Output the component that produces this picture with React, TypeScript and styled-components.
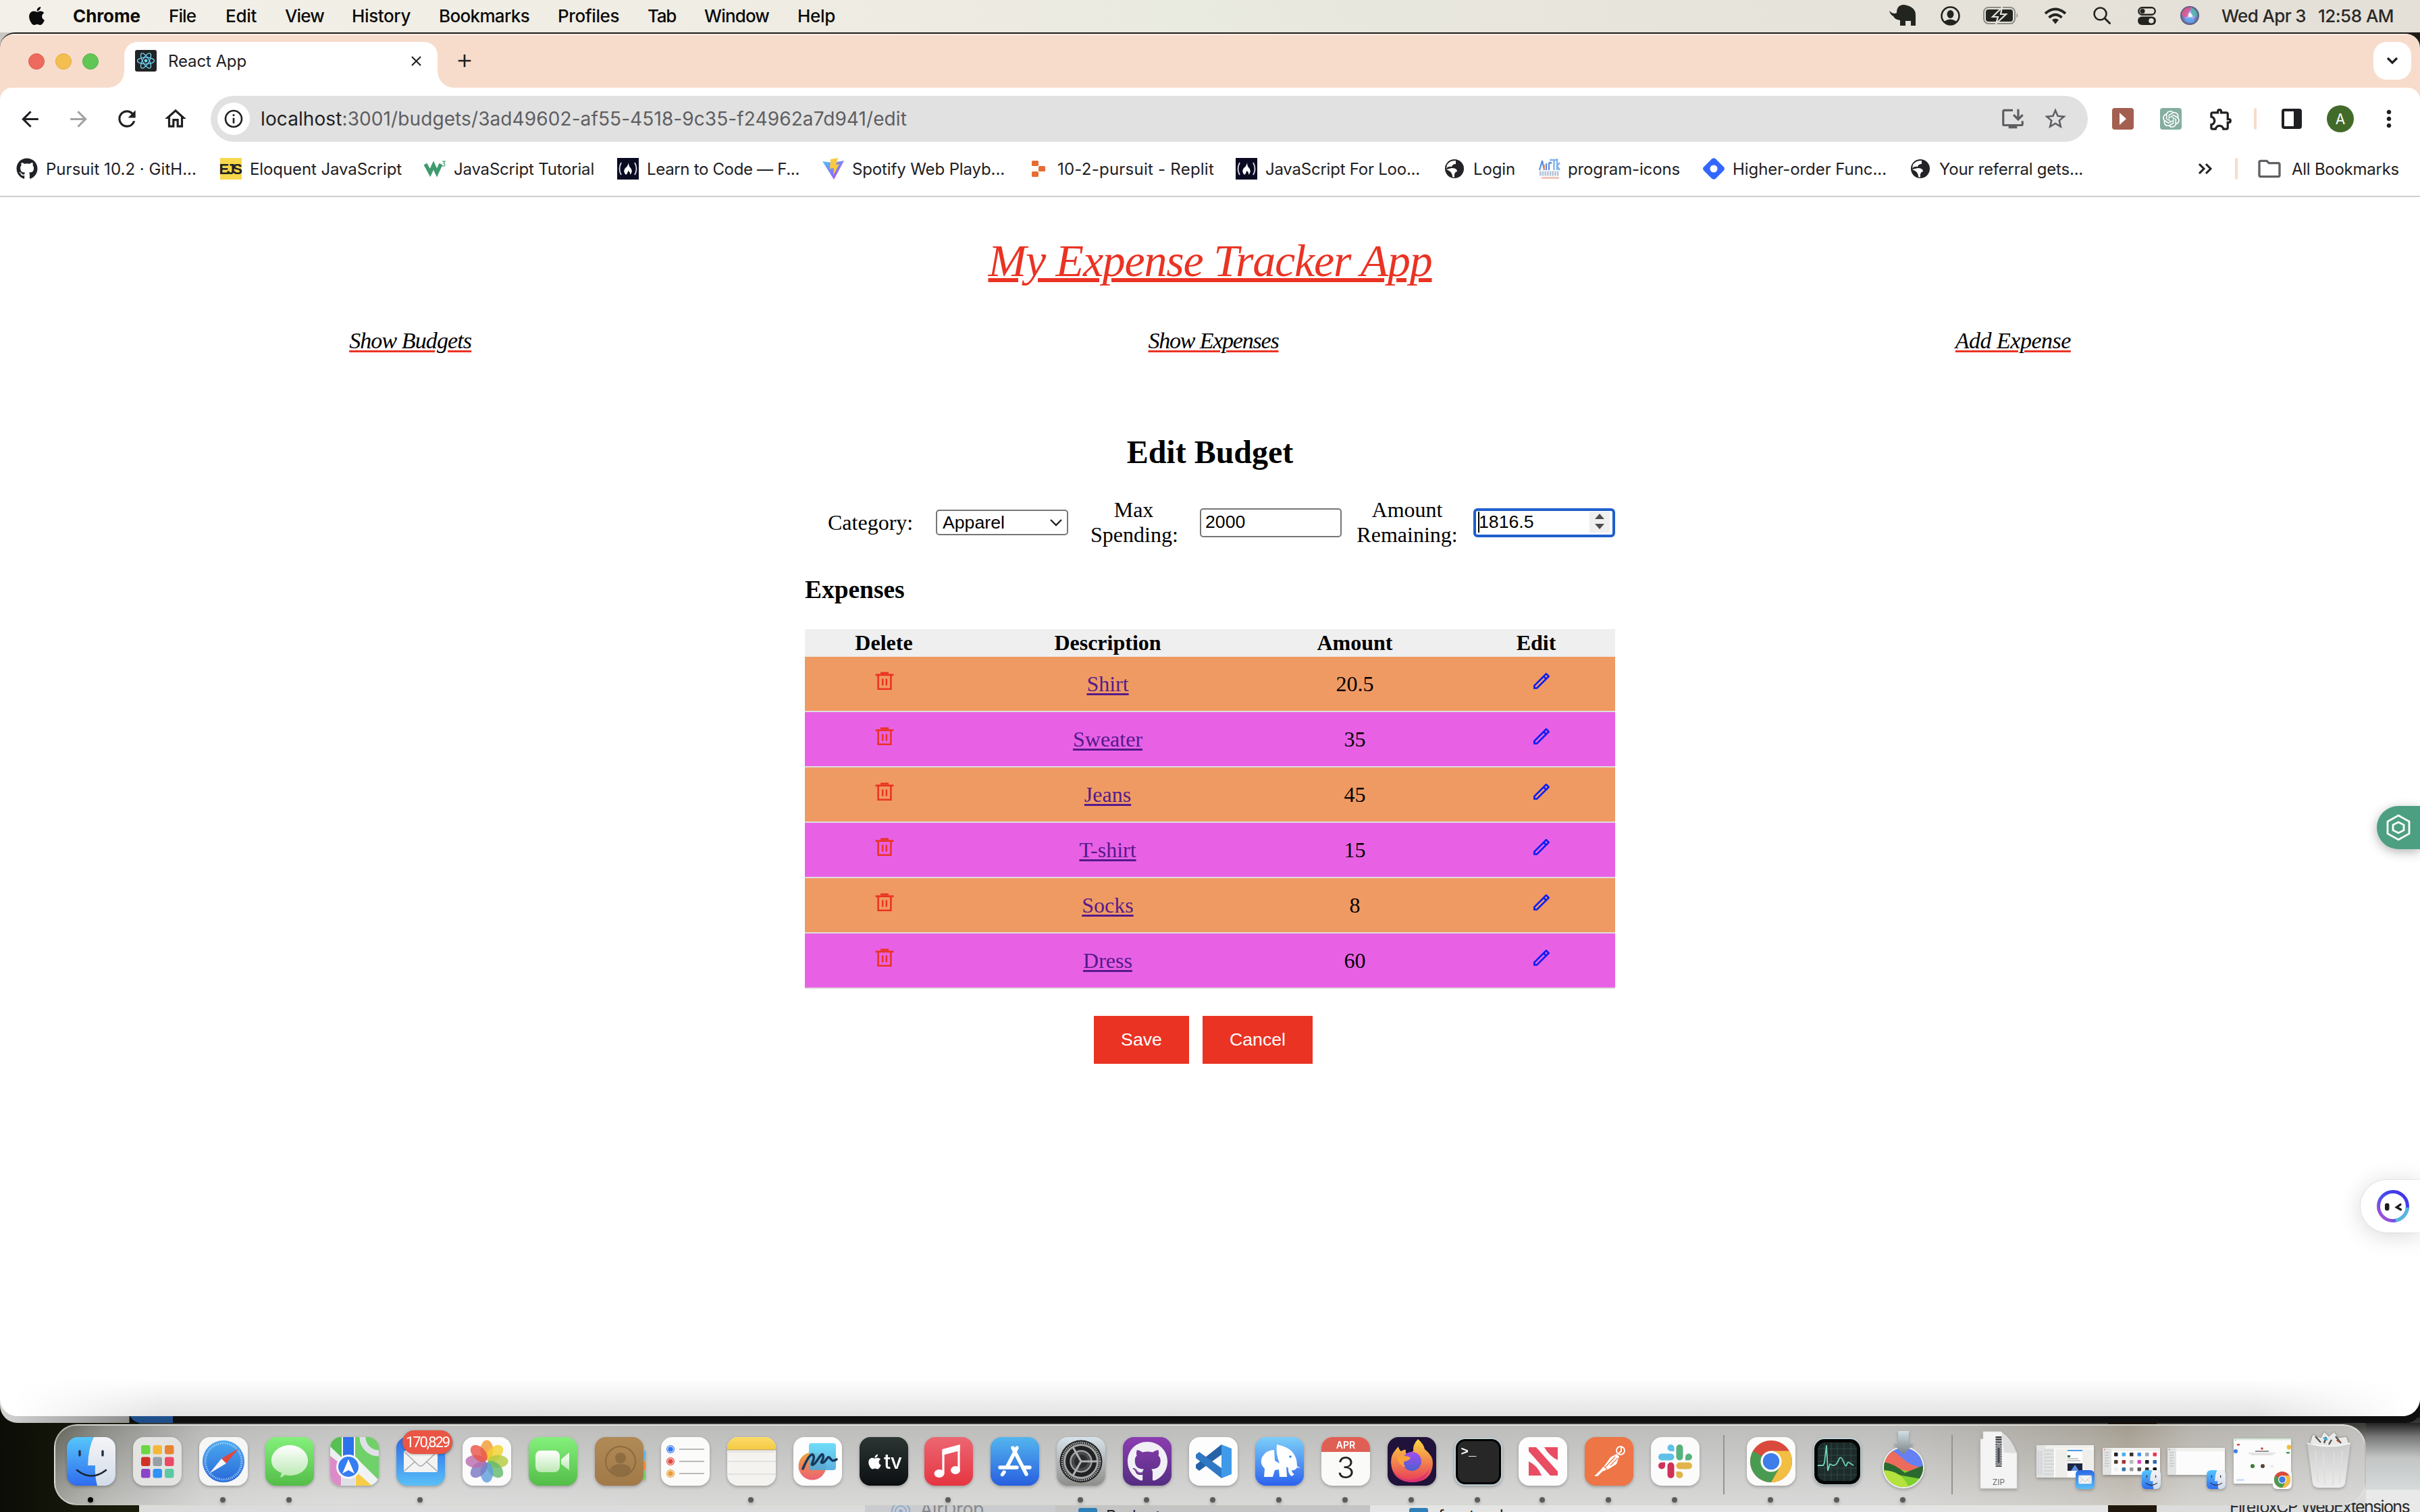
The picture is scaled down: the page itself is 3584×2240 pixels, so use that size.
import React, { useLayoutEffect, useRef, useState } from "react";
import styled, { createGlobalStyle, css } from "styled-components";
import { FaApple, FaGithub } from "react-icons/fa";
import { SiOpenai } from "react-icons/si";
import { RiPencilLine } from "react-icons/ri";
import {
  MdArrowBack,
  MdArrowForward,
  MdRefresh,
  MdOutlineHome,
  MdOutlineInfo,
  MdInstallDesktop,
  MdStarBorder,
  MdOutlineExtension,
  MdMoreVert,
  MdClose,
  MdAdd,
  MdOutlineFolder,
} from "react-icons/md";

const UI = `Inter, "Liberation Sans", sans-serif`;
const SERIF = `"Liberation Serif", serif`;
const SANS = `"Liberation Sans", Arial, sans-serif`;
const SCRIPT = `"Apple Chancery", "Z003", "URW Chancery L", "Liberation Serif", cursive`;

const Global = createGlobalStyle`
  html, body { margin: 0; padding: 0; overflow: hidden; background: #101208; }
  * { box-sizing: border-box; }
  svg { display: block; flex: none; }
`;

/* ---------- text fitted to a fixed width ---------- */

const FitBox = styled.span<{ $w: number }>`
  display: block;
  flex: none;
  width: ${(p) => p.$w}px;
  white-space: pre;
`;

function Fit({ w, children }: { w: number; children: React.ReactNode }) {
  const ref = useRef<HTMLSpanElement>(null);
  const [spacing, setSpacing] = useState(0);
  useLayoutEffect(() => {
    const el = ref.current;
    if (!el) return;
    const count = (el.textContent || "").length;
    setSpacing((w - el.getBoundingClientRect().width) / count);
  }, [w]);
  return (
    <FitBox $w={w}>
      <span ref={ref} style={{ letterSpacing: spacing }}>
        {children}
      </span>
    </FitBox>
  );
}

/* ---------- desktop ---------- */

const Desktop = styled.div`
  position: relative;
  width: 3584px;
  height: 2240px;
  overflow: hidden;
  display: flex;
  flex-direction: column;
  background: linear-gradient(90deg, #0c0d07, #1a1d0c 180px, #15160c);
  font-family: ${UI};
  color: #1f2023;
`;

const Backdrop = styled.div<{ $x: number; $y: number; $w: number; $h: number; $bg: string; $r?: string }>`
  position: absolute;
  left: ${(p) => p.$x}px;
  top: ${(p) => p.$y}px;
  width: ${(p) => p.$w}px;
  height: ${(p) => p.$h}px;
  background: ${(p) => p.$bg};
  border-radius: ${(p) => p.$r || 0};
`;

const PeekText = styled.div<{ $x: number; $y: number; $c: string; $size?: number }>`
  position: absolute;
  left: ${(p) => p.$x}px;
  top: ${(p) => p.$y}px;
  font-size: ${(p) => p.$size || 26}px;
  line-height: 30px;
  color: ${(p) => p.$c};
`;

const PeekIcon = styled.div<{ $x: number; $y: number }>`
  position: absolute;
  left: ${(p) => p.$x}px;
  top: ${(p) => p.$y}px;
`;

/* ---------- menu bar ---------- */

const MenuBar = styled.header`
  position: relative;
  height: 48px;
  flex: none;
  display: flex;
  align-items: center;
  padding: 0 39px 2px 39px;
  background: linear-gradient(90deg, #f3f0e9, #edebe1 1500px, #e9eae0 1750px, #e7e4dc 2400px, #e4e0d8);
  font-size: 26px;
  font-weight: 500;
  color: #0b0b0b;
`;

const MenuItem = styled.div<{ $ml: number; $bold?: boolean }>`
  margin-left: ${(p) => p.$ml}px;
  font-weight: ${(p) => (p.$bold ? 700 : 500)};
`;

const StatusArea = styled.div`
  margin-left: auto;
  display: flex;
  align-items: center;
`;

const StatusIcon = styled.div<{ $mr: number }>`
  margin-right: ${(p) => p.$mr}px;
`;

const Clock = styled.div`
  display: flex;
  gap: 18px;
  color: #2a2927;
`;

/* ---------- browser ---------- */

const Browser = styled.main`
  position: relative;
  height: 2050px;
  flex: none;
  border-top: 2px solid #1d1b19;
  border-radius: 22px 22px 26px 26px;
  background: #f7dccc;
  overflow: hidden;
  display: flex;
  flex-direction: column;
`;

const TabStrip = styled.div`
  height: 80px;
  flex: none;
  padding: 10px 13px 0 42px;
  display: flex;
  align-items: flex-start;
  border-top: 2px solid #faeee6;
`;

const Lights = styled.div`
  display: flex;
  gap: 16px;
  margin-top: 17px;
`;

const Light = styled.i<{ $c: string; $b: string }>`
  width: 24px;
  height: 24px;
  border-radius: 50%;
  background: ${(p) => p.$c};
  border: 1px solid ${(p) => p.$b};
`;

const Tab = styled.div`
  position: relative;
  margin-left: 38px;
  width: 464px;
  height: 68px;
  border-radius: 20px 20px 0 0;
  background: #fff;
  display: flex;
  align-items: center;
  padding: 0 22px 12px 16px;
  gap: 17px;
  font-size: 24px;
  &::before,
  &::after {
    content: "";
    position: absolute;
    bottom: 0;
    width: 24px;
    height: 24px;
  }
  &::before {
    left: -24px;
    background: radial-gradient(circle at 0 0, transparent 23.5px, #fff 24px);
  }
  &::after {
    right: -24px;
    background: radial-gradient(circle at 100% 0, transparent 23.5px, #fff 24px);
  }
`;

const TabClose = styled.div`
  margin-left: auto;
  margin-right: -3px;
`;

const NewTab = styled.div`
  margin: 12px 0 0 24px;
`;

const TabSearch = styled.div`
  margin-left: auto;
  width: 56px;
  height: 56px;
  border-radius: 20px;
  background: #fff;
  display: grid;
  place-items: center;
`;

const Toolbar = styled.div`
  height: 90px;
  flex: none;
  background: #fff;
  border-radius: 18px 18px 0 0;
  padding: 2px 0 0 26px;
  display: flex;
  align-items: center;
`;

const NavButton = styled.div<{ $ml: number; $dim?: boolean }>`
  margin-left: ${(p) => p.$ml}px;
  color: ${(p) => (p.$dim ? "#a2a2a3" : "#1f2023")};
`;

const Address = styled.div`
  margin-left: 33px;
  width: 2780px;
  height: 68px;
  flex: none;
  border-radius: 34px;
  background: #e1e1e1;
  display: flex;
  align-items: center;
  padding: 0 29px 0 10px;
  font-size: 28px;
  color: #5d5e61;
`;

const InfoChip = styled.div`
  width: 48px;
  height: 48px;
  border-radius: 50%;
  background: #fff;
  display: grid;
  place-items: center;
  color: #1f2023;
  margin-right: 16px;
`;

const Host = styled.b`
  font-weight: 400;
  color: #1f2023;
`;

const AddressTools = styled.div`
  margin-left: auto;
  display: flex;
  align-items: center;
  gap: 25px;
`;

const Extensions = styled.div`
  flex: none;
  display: flex;
  align-items: center;
  padding-left: 36px;
`;

const ExtTile = styled.div<{ $bg: string }>`
  width: 32px;
  height: 32px;
  flex: none;
  border-radius: 4px;
  background: ${(p) => p.$bg};
  color: #fff;
  display: grid;
  place-items: center;
  margin-right: 39px;
`;

const Divider = styled.i<{ $ml?: number; $mr: number }>`
  width: 4px;
  height: 32px;
  flex: none;
  border-radius: 2px;
  background: #f7dccc;
  margin-left: ${(p) => p.$ml || 0}px;
  margin-right: ${(p) => p.$mr}px;
`;

const Avatar = styled.div`
  width: 40px;
  height: 40px;
  flex: none;
  border-radius: 50%;
  background: #426b2a;
  color: #fff;
  font-size: 21px;
  display: grid;
  place-items: center;
  margin: 0 32px 0 37px;
`;

const Bookmarks = styled.nav`
  height: 72px;
  flex: none;
  background: #fff;
  border-bottom: 2px solid #cecece;
  padding: 0 31px 10px 24px;
  display: flex;
  align-items: center;
  font-size: 24px;
`;

const Bookmark = styled.div<{ $w: number }>`
  width: ${(p) => p.$w}px;
  flex: none;
  display: flex;
  align-items: center;
  gap: 12px;
`;

const BookmarkIcon = styled.div`
  width: 32px;
  height: 32px;
  flex: none;
  display: grid;
  place-items: center;
  color: #1f2328;
`;

const BookmarksEnd = styled.div`
  margin-left: auto;
  display: flex;
  align-items: center;
`;

const EndGap = styled.i`
  width: 33px;
`;

const LabelGap = styled.i`
  width: 13px;
`;

/* ---------- page ---------- */

const Page = styled.section`
  position: relative;
  flex: 1;
  background: #fff;
  font-family: ${SERIF};
  font-size: 32px;
  line-height: 37px;
  color: #000;
  padding: 54px 16px 0;
  display: flex;
  flex-direction: column;
  align-items: center;
  &::after {
    content: "";
    position: absolute;
    inset: auto 0 0 0;
    height: 56px;
    background: linear-gradient(180deg, rgba(225, 225, 225, 0), #f3f3f3 45%, #e2e2e2);
    mask-image: linear-gradient(90deg, transparent 20px, #000 240px, #000 3340px, transparent 3564px);
  }
`;

const Title = styled.h1`
  margin: 0;
  font-family: ${SCRIPT};
  font-style: italic;
  font-weight: 400;
  font-size: 68px;
  line-height: 80px;
  color: #ea3323;
  text-decoration: underline;
  text-decoration-thickness: 6px;
  text-underline-offset: 3px;
`;

const Links = styled.nav`
  width: 100%;
  margin-top: 59px;
  display: flex;
  justify-content: space-around;
`;

const ScriptLink = styled.a`
  font-family: ${SCRIPT};
  font-style: italic;
  font-size: 34px;
  line-height: 40px;
  color: #000;
  text-decoration: underline #ea3323;
  text-decoration-thickness: 3px;
  text-underline-offset: 3px;
`;

const Heading = styled.h2`
  margin: 117px 0 39px;
  font-size: 48px;
  line-height: 56px;
`;

const Form = styled.form`
  width: 1200px;
  height: 74px;
  padding-left: 34px;
  display: flex;
  align-items: center;
`;

const Label = styled.label<{ $w: number; $ml?: number }>`
  width: ${(p) => p.$w}px;
  margin-left: ${(p) => p.$ml || 0}px;
  flex: none;
  text-align: center;
`;

const field = css`
  flex: none;
  font-family: ${SANS};
  font-size: 26.667px;
  background: #fff;
  display: flex;
  align-items: center;
`;

const Select = styled.div`
  ${field}
  width: 196px;
  height: 38px;
  margin-left: 35px;
  border: 2px solid #767676;
  border-radius: 5px;
  padding: 0 6px 0 8px;
  justify-content: space-between;
`;

const Input = styled.div<{ $ml: number; $focus?: boolean }>`
  ${field}
  width: 210px;
  height: 43px;
  margin-left: ${(p) => p.$ml}px;
  border: ${(p) => (p.$focus ? "4px solid #205fcb" : "2px solid #767676")};
  border-radius: ${(p) => (p.$focus ? 6 : 5)}px;
  padding: ${(p) => (p.$focus ? "0 4px 2px 3px" : "0 4px 2px 6px")};
`;

const Caret = styled.i`
  width: 2px;
  height: 31px;
  margin-right: -1px;
  background: #000;
`;

const Spinner = styled.div`
  margin-left: auto;
  width: 30px;
  height: 31px;
  background: #efefef;
  display: grid;
  place-items: center;
`;

const SubHeading = styled.h3`
  width: 1200px;
  margin: 41px 0 36px;
  font-size: 37.44px;
  line-height: 44px;
`;

const Table = styled.div`
  width: 1200px;
`;

const Row = styled.div<{ $bg: string }>`
  display: grid;
  grid-template-columns: 234px 429px 303px 234px;
  height: 82px;
  align-items: center;
  text-align: center;
  justify-items: center;
  background: ${(p) => p.$bg};
  border-bottom: 2px solid #dddddd;
`;

const HeadRow = styled(Row)`
  height: 41px;
  border: 0;
  font-weight: 700;
`;

const ItemLink = styled.a`
  color: #551a8b;
  text-decoration: underline;
  text-decoration-thickness: 3px;
  text-underline-offset: 3px;
`;

const RowIcon = styled.div<{ $c: string; $shift?: number }>`
  color: ${(p) => p.$c};
  padding: 0 0 8px ${(p) => p.$shift || 0}px;
`;

const Buttons = styled.div`
  width: 1200px;
  margin-top: 40px;
  padding-left: 428px;
  display: flex;
  gap: 20px;
`;

const Button = styled.div<{ $w: number }>`
  width: ${(p) => p.$w}px;
  height: 71px;
  background: #ea3323;
  color: #fff;
  font-family: ${SANS};
  font-size: 26.667px;
  display: grid;
  place-items: center;
`;

const GreenTag = styled.div`
  position: absolute;
  right: 0;
  top: 902px;
  width: 64px;
  height: 64px;
  border-radius: 32px 0 0 32px;
  background: #4c9f80;
  box-shadow: 0 4px 16px rgba(0, 0, 0, 0.3);
  display: flex;
  align-items: center;
  padding-left: 14px;
`;

const BotTag = styled.div`
  position: absolute;
  right: 0;
  top: 1456px;
  width: 88px;
  height: 78px;
  border-radius: 39px 0 0 39px;
  background: #fff;
  box-shadow: 0 4px 34px rgba(0, 0, 0, 0.16), 0 0 0 1px #f2f2f2;
  display: flex;
  align-items: center;
  padding-left: 24px;
`;

/* ---------- dock ---------- */

const Dock = styled.footer`
  position: relative;
  margin: 12px 80px 0;
  height: 120px;
  flex: none;
  border-radius: 34px;
  border: 2px solid rgba(236, 236, 230, 0.55);
  background: linear-gradient(180deg, rgba(255, 255, 255, 0), rgba(255, 255, 255, 0.42)),
    linear-gradient(90deg, #62645a, #8b8c86 70px, #b9b9b8 220px, #c3c3c2 420px, #bcbcbb 900px, #bdbdbc 2700px, #aaa69d 3010px, #a49c8f 3070px, #b6b3ad 3160px, #bfbebc);
  display: flex;
  align-items: flex-start;
  padding: 17px 21px 0 17px;
`;

const DockItem = styled.div<{ $ml: number; $w: number }>`
  position: relative;
  width: ${(p) => p.$w}px;
  height: 72px;
  margin-left: ${(p) => p.$ml}px;
  flex: none;
  display: flex;
  justify-content: center;
  filter: drop-shadow(0 2px 2px rgba(0, 0, 0, 0.25));
`;

const Dot = styled.i<{ $dark?: boolean }>`
  position: absolute;
  left: 50%;
  top: 89px;
  width: 8px;
  height: 8px;
  margin-left: -5px;
  border-radius: 50%;
  background: ${(p) => (p.$dark ? "#000" : "#5b5b59")};
`;

const DockDivider = styled.i<{ $ml: number }>`
  width: 2px;
  height: 88px;
  margin: -3px 0 0 ${(p) => p.$ml}px;
  background: #949492;
  flex: none;
`;

const MailBadge = styled.div`
  position: absolute;
  left: 9px;
  top: -10px;
  width: 74px;
  height: 35px;
  border-radius: 18px;
  background: #ea5545;
  color: #fff;
  font-family: Roboto, ${SANS};
  font-size: 22px;
  line-height: 36px;
  padding-left: 5px;
  box-shadow: 0 1px 3px rgba(0, 0, 0, 0.3);
`;

const MiniBadge = styled.div`
  position: absolute;
  right: -1px;
  top: 49px;
`;

const Lift = styled.div`
  margin-top: -9px;
`;

/* ---------- drawings ---------- */

const TILE = { x: 0, y: 0, width: 72, height: 72, rx: 16 };

const Svg = ({ children, s = 72, box = 72 }: { children: React.ReactNode; s?: number; box?: number }) => (
  <svg width={s} height={s} viewBox={`0 0 ${box} ${box}`} overflow="visible">
    {children}
  </svg>
);

const Grad = ({ id, a, b }: { id: string; a: string; b: string }) => (
  <linearGradient id={id} x1="0" y1="0" x2="0" y2="1">
    <stop offset="0" stopColor={a} />
    <stop offset="1" stopColor={b} />
  </linearGradient>
);

const BinIcon = () => (
  <svg width="32" height="32" viewBox="0 0 32 32">
    <path d="M10 2.600H22V5.400H10Z" fill="currentColor" />
    <path d="M2.600 5.400H29.400V8.200H2.600Z" fill="currentColor" />
    <path d="M6.600 8V27.800H25.400V8" fill="none" stroke="currentColor" strokeWidth="2.600" />
    <path d="M13.200 12.600V22.400M18.800 12.600V22.400" stroke="currentColor" strokeWidth="2.500" />
  </svg>
);

const Finder = ({ s = 72 }: { s?: number }) => (
  <Svg s={s}>
    <Grad id="fin" a="#56c6fb" b="#2f6cf0" />
    <Grad id="finw" a="#f4f4f6" b="#d3dcea" />
    <rect {...TILE} fill="url(#fin)" />
    <path d="M40 0H56a16 16 0 0 1 16 16V56a16 16 0 0 1-16 16H45Q41 57 42 42H31Q32 15 40 0Z" fill="url(#finw)" />
    <path d="M19 21v6M53 21v6" stroke="#22303f" strokeWidth="3.4" strokeLinecap="round" />
    <path d="M15 49Q36 66 58 49" fill="none" stroke="#1a2533" strokeWidth="2.6" strokeLinecap="round" />
  </Svg>
);

const Launchpad = () => {
  const colors = ["#6bd843", "#f5b63a", "#e88431", "#cf3327", "#96a0a4", "#ec4964", "#8d45c8", "#2f94f5", "#5bc9a2"];
  return (
    <Svg>
      <rect {...TILE} fill="#e3e4e2" />
      {colors.map((c, i) => (
        <rect key={i} x={12 + (i % 3) * 17.5} y={12 + Math.floor(i / 3) * 17.5} width="13.5" height="13.5" rx="3" fill={c} />
      ))}
    </Svg>
  );
};

const Safari = () => (
  <Svg>
    <Grad id="saf" a="#4ba9f0" b="#2869d8" />
    <rect {...TILE} fill="#f6f6f7" />
    <circle cx="36" cy="36" r="31" fill="url(#saf)" />
    <circle cx="36" cy="36" r="27" fill="none" stroke="#b9dcfa" strokeWidth="3.4" strokeDasharray="1 1.82" />
    <path d="M58 17 40 39 33 32Z" fill="#e3473c" />
    <path d="M15 54 33 32 40 39Z" fill="#f4f5f7" />
  </Svg>
);

const Messages = () => (
  <Svg>
    <Grad id="msg" a="#84f07c" b="#53bd48" />
    <Grad id="bub" a="#ffffff" b="#b9e8b1" />
    <rect {...TILE} fill="url(#msg)" />
    <path d="M36 12c15 0 27 10 27 23S51 57 36 57q-4 0-7-1-3 3-8 4 3-3 3-7C15 50 9 43 9 35 9 22 21 12 36 12Z" fill="url(#bub)" />
  </Svg>
);

const Maps = () => (
  <Svg>
    <clipPath id="mapc"><rect {...TILE} /></clipPath>
    <g clipPath="url(#mapc)">
      <rect width="72" height="72" fill="#70d069" />
      <path d="M0 8 64 72H0Z" fill="#eceff1" />
      <path d="M0 28 16 40V72H0Z" fill="#dd8bc8" />
      <path d="M38 72V50L62 72Z" fill="#f8cd47" />
      <path d="M0 0H20V33L0 14Z" fill="#58bf53" />
      <circle cx="72" cy="0" r="24" fill="none" stroke="#dfe1e6" strokeWidth="9" />
      <path d="M17 0h20v36H17z" fill="#f2f5f8" />
      <path d="M19 0h16v36H19z" fill="#2d72ec" />
      <path d="M17 60h20v12H17z" fill="#dde0e4" />
      <path d="M37 29 72 64V72H62L37 50Z" fill="#f1f3f3" />
      <circle cx="27" cy="44" r="18" fill="#f5f7fa" />
      <circle cx="27" cy="44" r="15" fill="#357df3" />
      <path d="M27 33 36 54 27 49 18 54Z" fill="#fff" />
    </g>
  </Svg>
);

const MailArt = ({ s = 72 }: { s?: number }) => (
  <Svg s={s}>
    <Grad id="mail" a="#2c69e4" b="#5ac0f8" />
    <rect {...TILE} fill="url(#mail)" />
    <rect x="11" y="20" width="50" height="32" rx="3" fill="#f3f3f4" />
    <path d="M12 22 32 41q4 4 8 0L60 22M12 50 28 36M60 50 44 36" fill="none" stroke="#a7a9ae" strokeWidth="1.6" />
  </Svg>
);

const Photos = () => {
  const petals = ["#f39a33", "#f2d12f", "#b5cb40", "#63b96d", "#5f9fdc", "#7a79c2", "#b96db0", "#ea5648"];
  return (
    <Svg>
      <rect {...TILE} fill="#fbfbfb" />
      {petals.map((c, i) => (
        <ellipse key={c} cx="36" cy="19.5" rx="9.5" ry="15" fill={c} opacity=".82" transform={`rotate(${i * 45} 36 36)`} />
      ))}
    </Svg>
  );
};

const FaceTime = () => (
  <Svg>
    <Grad id="ft" a="#84f07c" b="#53bd48" />
    <Grad id="ftw" a="#ffffff" b="#bde9b4" />
    <rect {...TILE} fill="url(#ft)" />
    <rect x="10" y="20" width="36" height="32" rx="8" fill="url(#ftw)" />
    <path d="M48 33 60 23V49L48 40Z" fill="url(#ftw)" />
  </Svg>
);

const Contacts = () => (
  <Svg>
    <Grad id="con" a="#b08a56" b="#a27948" />
    <path d="M66 20h9v14h-9z" fill="#5fb4e8" />
    <path d="M66 36h9v13h-9z" fill="#ee8a2e" />
    <path d="M66 50h9v13h-9z" fill="#6fce64" />
    <rect {...TILE} fill="url(#con)" />
    <circle cx="38" cy="36" r="22" fill="none" stroke="#8b6a40" strokeWidth="2" />
    <circle cx="38" cy="31" r="8" fill="#8f6d43" />
    <path d="M22 49q3-9 16-9t16 9q-6 9-16 9t-16-9Z" fill="#8f6d43" />
  </Svg>
);

const Reminders = () => (
  <Svg>
    <rect {...TILE} fill="#fbfbfa" />
    {["#3478f0", "#e2493f", "#eb9a35"].map((c, i) => (
      <g key={c}>
        <circle cx="14" cy={18 + i * 18} r="5.4" fill="none" stroke={c} strokeWidth="1.2" />
        <circle cx="14" cy={18 + i * 18} r="3.8" fill={c} />
        <path d={`M27 ${18 + i * 18}H64`} stroke="#b9babc" strokeWidth="1.8" />
      </g>
    ))}
  </Svg>
);

const Notes = () => (
  <Svg>
    <Grad id="nt" a="#fbdc68" b="#f5c842" />
    <rect {...TILE} fill="#f4f3f0" />
    <path d="M0 19V16A16 16 0 0 1 16 0H56A16 16 0 0 1 72 16V19Z" fill="url(#nt)" />
    <path d="M0 19H72" stroke="#a89a72" />
    <path d="M2 22H70" stroke="#bdbdbb" strokeWidth="1.6" strokeDasharray="1 1.6" />
    <path d="M0 36H72M0 55H72" stroke="#d2d1cf" strokeWidth="1.2" />
  </Svg>
);

const Freeform = () => (
  <Svg>
    <Grad id="ffa" a="#f0a43b" b="#ec6173" />
    <Grad id="ffb" a="#5fd9f9" b="#4ca9dc" />
    <rect {...TILE} fill="#fdfdfd" />
    <circle cx="28" cy="43" r="20.5" fill="url(#ffa)" />
    <rect x="23" y="9" width="40" height="40" rx="4" fill="url(#ffb)" opacity=".9" />
    <path d="M14 47C22 28 28 22 30 28S24 42 29 41 42 20 44 27 38 38 43 38 50 28 53 30 56 38 64 33" fill="none" stroke="#163a5f" strokeWidth="3.6" strokeLinecap="round" />
  </Svg>
);

const TvText = styled.span`
  font-size: 30px;
  font-weight: 500;
  letter-spacing: -1px;
  line-height: 30px;
`;

const TvTile = styled.div`
  width: 72px;
  height: 72px;
  border-radius: 16px;
  background: linear-gradient(#2c3533, #0c0f12);
  color: #fff;
  display: flex;
  align-items: center;
  justify-content: center;
  gap: 1px;
`;

const Music = () => (
  <Svg>
    <Grad id="mus" a="#ec6672" b="#e53541" />
    <rect {...TILE} fill="url(#mus)" />
    <path d="M28 54V22L51 14V49" fill="none" stroke="#fff" strokeWidth="3.2" />
    <path d="M26.4 18 52.6 11V20L26.4 27Z" fill="#fff" />
    <ellipse cx="22" cy="54" rx="7.500" ry="6" fill="#fff" />
    <ellipse cx="46" cy="49" rx="7" ry="6" fill="#fff" />
  </Svg>
);

const AppStore = () => (
  <Svg>
    <Grad id="as" a="#53b5ee" b="#285fdf" />
    <rect {...TILE} fill="url(#as)" />
    <g stroke="#fff" strokeWidth="5.4" strokeLinecap="round">
      <path d="M39 16 25 43M33 16 53 55M14 45H39M48 45H58M20 52 17.5 55.5" />
    </g>
  </Svg>
);

const Settings = () => (
  <Svg>
    <Grad id="set" a="#d6e3ea" b="#8e8d89" />
    <rect {...TILE} fill="url(#set)" />
    <circle cx="36" cy="36" r="31.5" fill="#1f2122" />
    <circle cx="36" cy="36" r="28" fill="none" stroke="#a9aaaa" strokeWidth="3" strokeDasharray="1.6 1.3" />
    <circle cx="36" cy="36" r="24.5" fill="none" stroke="#a6a7a7" strokeWidth="3" />
    <circle cx="36" cy="36" r="15.5" fill="#474a4b" stroke="#a0a1a1" strokeWidth="2.4" />
    <circle cx="36" cy="36" r="10" fill="#2a2c2d" />
    <path d="M36 36H60M36 36 24 15M36 36 24 57" stroke="#b2b3b3" strokeWidth="3" />
  </Svg>
);

const GitHubTile = styled.div`
  width: 72px;
  height: 72px;
  border-radius: 16px;
  background: linear-gradient(#8b3db0, #552d82);
  color: #f1eff5;
  display: grid;
  place-items: center;
`;

const VSCode = () => (
  <Svg>
    <rect {...TILE} fill="#fdfdfd" />
    <path d="M48 11V26L15 50 10 46V41Z" fill="#2563a8" />
    <path d="M48 61V46L15 22 10 26V31Z" fill="#2f79c4" />
    <path d="M48 11 63 17V55L48 61Z" fill="#3f9bea" />
  </Svg>
);

const Postgres = () => (
  <Svg>
    <Grad id="pg" a="#7ccff8" b="#2c62ee" />
    <rect {...TILE} fill="url(#pg)" />
    <path d="M32 11q15 3 22 10 8 8 8 22l5 3-5-1q-3 5-8 4 0 4 4 6l-4 3q-6-4-5-12l-3-2 1 15H36l-1-11-6 1-3 10H13l1-12Q6 39 10 30q6-11 18-11l1 16 7 4Q30 24 32 11Z" fill="#fff" />
    <circle cx="52" cy="29" r="1.8" fill="#2f8df0" />
  </Svg>
);

const CalTile = styled.div`
  width: 72px;
  height: 72px;
  border-radius: 16px;
  overflow: hidden;
  background: #fafaf9;
  text-align: center;
`;

const CalMonth = styled.div`
  height: 22px;
  background: #e05f54;
  color: #fff;
  font-size: 14px;
  font-weight: 600;
  line-height: 24px;
`;

const CalDay = styled.div`
  color: #222;
  font-size: 44px;
  font-weight: 300;
  line-height: 46px;
`;

const Firefox = () => (
  <Svg>
    <Grad id="fx" a="#fcd83f" b="#e8385a" />
    <Grad id="fxp" a="#a24df0" b="#4e5fd0" />
    <rect {...TILE} fill="#20123a" />
    <path d="M45 3q9 8 10 15 13 10 12 22-2 27-31 27Q7 66 5 38 5 26 11 20q3-4 5-6 1 5 4 7 5-3 7-2-1 4 2 7 4-4 9-5Q37 11 45 3Z" fill="url(#fx)" />
    <circle cx="36" cy="36" r="14" fill="url(#fxp)" />
    <path d="M14 29q10-3 20 1-1 5-9 6-3 3 2 9Q15 41 14 29Z" fill="#f9a23a" />
    <path d="M9 50q10 15 28 13 17-2 25-16-5 19-26 20Q16 66 9 50Z" fill="#d4307f" opacity=".8" />
  </Svg>
);

const TermTile = styled.div`
  width: 69px;
  height: 69px;
  border-radius: 15px;
  border: 4px solid #000;
  outline: 2px solid #bfcfd6;
  outline-offset: -1px;
  background: #272727;
  color: #fff;
  font: 700 19px/20px "Liberation Mono", monospace;
  padding: 6px 0 0 5px;
  margin-top: 2px;
`;

const News = () => (
  <Svg>
    <rect {...TILE} fill="#fdfdfd" />
    <path d="M15 15H26L58 51V57H47L15 21Z" fill="#e94d63" />
    <path d="M38 15H58V34Q45 28 38 15Z" fill="#e94d63" />
    <path d="M15 36Q29 43 34 57H15Z" fill="#e94d63" />
  </Svg>
);

const Postman = () => (
  <Svg>
    <rect {...TILE} fill="#ee7545" />
    <circle cx="53" cy="20" r="6" fill="none" stroke="#fff" strokeWidth="1.8" />
    <path d="M54 14v7l-5 4" fill="none" stroke="#fff" strokeWidth="2" />
    <path d="M47 25 51 29 47 40 36 47 26 51 19 58H14L23 49 31 40 38 30Z" fill="#fff" />
    <path d="M45 29 31 44M49 31 38 42M28 43 33 48" stroke="#ee7545" strokeWidth="1.300" />
  </Svg>
);

const Slack = () => (
  <Svg>
    <rect {...TILE} fill="#fbfbfb" />
    <g strokeWidth="10" strokeLinecap="round">
      <path d="M16 29.5H29.5" stroke="#5fc0e8" />
      <path d="M42.500 16V29.500" stroke="#56b27e" />
      <path d="M42.500 42.500H56" stroke="#e2b44a" />
      <path d="M29.500 42.500V56" stroke="#cf3158" />
    </g>
    <path d="M34.500 21H29.500A5 5 0 1 1 34.500 16Z" fill="#5fc0e8" />
    <path d="M51 34.500V29.500A5 5 0 1 1 56 34.500Z" fill="#56b27e" />
    <path d="M37.500 51H42.500A5 5 0 1 1 37.500 56Z" fill="#e2b44a" />
    <path d="M21 37.500V42.500A5 5 0 1 1 16 37.500Z" fill="#cf3158" />
  </Svg>
);

const ChromeArt = ({ s = 72 }: { s?: number }) => (
  <Svg s={s}>
    <rect {...TILE} fill="#fbfbfa" />
    <circle cx="36" cy="36" r="31" fill="#d94a3d" />
    <path d="M36 36 9.200 20.500A31 31 0 0 0 36 67L49.400 43.700Z" fill="#4a9b52" />
    <path d="M36 20.500H62.800A31 31 0 0 1 36 67L49.400 43.700Z" fill="#f3bf42" />
    <circle cx="36" cy="36" r="15.500" fill="#fff" />
    <circle cx="36" cy="36" r="12.300" fill="#3f7de8" />
  </Svg>
);

const Activity = () => (
  <Svg>
    <rect x="1" y="1" width="70" height="70" rx="16" fill="#c3d6dc" />
    <rect x="2" y="3" width="68" height="67" rx="15" fill="#050505" />
    <rect x="7" y="8" width="58" height="57" rx="10" fill="#1d2b2a" />
    <path d="M17 8V65M27 8V65M36 8V65M46 8V65M56 8V65M7 17H65M7 27H65M7 36H65M7 46H65M7 56H65" stroke="#33504b" strokeWidth=".8" />
    <path d="M7 42H15L17 38 20 12 22 50 25 40 30 42Q35 42 38 34T45 36 50 41 54 38 60 42" fill="none" stroke="#6fd3b8" strokeWidth="1.8" />
  </Svg>
);

const Installer = () => (
  <svg width="64" height="86" viewBox="0 0 64 86">
    <Grad id="arw" a="#cfe0e5" b="#7b8084" />
    <clipPath id="insc"><circle cx="32" cy="54" r="29" /></clipPath>
    <circle cx="32" cy="54" r="31" fill="#eeeef2" />
    <g clipPath="url(#insc)">
      <rect y="20" width="64" height="66" fill="#7fd02e" />
      <path d="M0 20H64V60L0 34Z" fill="#6580f4" />
      <path d="M0 26Q16 26 30 40T64 54V66L0 50Z" fill="#ec6b5c" />
      <path d="M0 46Q16 46 34 62L64 50V72L30 66 0 60Z" fill="#2a6a30" />
      <path d="M0 58Q30 58 40 84L0 86Z" fill="#b5e23c" />
    </g>
    <path d="M24 0H40V19H47L32 35 17 19H24Z" fill="url(#arw)" />
  </svg>
);

const Zip = () => (
  <svg width="56" height="86" viewBox="0 0 56 86">
    <path d="M5 1H32L55 33V85H1V12H5Z" fill="#f4f4f4" stroke="#dcdcdc" />
    <path d="M32 1Q34 16 36 32L55 33Q48 12 32 1Z" fill="#dedede" />
    <path d="M28 8V53" stroke="#3d3f41" strokeWidth="9" strokeDasharray="2.400 1.200" />
    <path d="M28 22V48" stroke="#8d9298" strokeWidth="7" strokeLinecap="round" />
    <path d="M28 26V46" stroke="#45494d" strokeWidth="3" strokeLinecap="round" />
    <text x="28" y="80" textAnchor="middle" fontFamily="Inter, sans-serif" fontSize="12" fill="#6b6b6b">ZIP</text>
  </svg>
);

const Thumb = ({ kind }: { kind: "mail" | "apps" | "empty" | "chrome" }) => {
  const h = { mail: 48, apps: 40, empty: 40, chrome: 67 }[kind];
  const top = { mail: 12, apps: 16, empty: 16, chrome: 2 }[kind];
  return (
    <svg width="85" height={h + top} viewBox={`0 ${-top} 85 ${h + top}`}>
      <rect width="85" height={h} rx="2" fill="#fcfcfc" />
      {kind !== "chrome" && <rect width={kind === "mail" ? 26 : 13} height={h} rx="2" fill="#e2e3e3" />}
      {kind !== "chrome" && <rect x="13" width="72" height="5" fill="#f0f0ee" />}
      {kind === "mail" && (
        <>
          <path d="M3 9v36M7 9v36" stroke="#c3c7ce" strokeDasharray="1.500 1.500" strokeWidth="2.400" />
          <path d="M11 8H26M11 13H24M11 18H26M11 23H25M11 28H26M11 33H24M11 38H26M11 43H25" stroke="#c4c4c4" />
          <rect x="28" y="6" width="57" height="42" fill="#efeeeb" />
          <rect x="46" y="7" width="22" height="41" fill="#fdfdfd" />
          <rect x="46" y="7" width="22" height="2" fill="#4e9bef" />
          <rect x="46" y="15" width="4" height="3" fill="#2b6b4b" />
          <path d="M46 20H62M46 23H65" stroke="#999" />
          <rect x="46" y="27" width="22" height="11" fill="#1c2541" />
          <path d="M51 38 57 29 63 38Z" fill="#5f8fe0" />
        </>
      )}
      {kind === "apps" &&
        ["#222", "#49b0ef", "#333", "#3e8ef0", "#9ab", "#e35", "#4a3a2a", "#a33", "#bbb", "#d4b", "#222", "#36a", "#eee", "#37a", "#999", "#555", "#333", "#111"].map((c, i) => (
          <rect key={i} x={17 + (i % 6) * 11.5} y={7 + Math.floor(i / 6) * 11} width="5.500" height="5.500" rx="1" fill={c} />
        ))}
      {(kind === "apps" || kind === "empty") && (
        <path d="M3 7H10M3 11H9M3 15H10M3 19H8M3 23H10M3 27H9" stroke="#b4b7bb" />
      )}
      {kind !== "mail" && <path d="M2 2.500h1.500" stroke="#e4574c" strokeWidth="1.500" />}
      {kind === "chrome" && (
        <>
          <rect width="85" height="2.500" fill="#d5e9d9" />
          <circle cx="42" cy="15" r="1.800" fill="#c7463c" />
          <path d="M32 19H52" stroke="#555" strokeWidth="1.300" />
          <path d="M22 22H62M26 24H58" stroke="#bbb" strokeWidth=".8" />
          <circle cx="28" cy="41" r="3" fill="#3c7a32" />
          <circle cx="43" cy="41" r="3" fill="#5c4136" />
          <circle cx="57" cy="41" r="2.600" fill="#eee" />
          <circle cx="3" cy="19" r="3" fill="#3f7de8" />
          <circle cx="82" cy="13" r="3.400" fill="#f3bf42" />
          <rect x="5" y="8" width="4" height="2.500" fill="#d94a3d" />
          <rect x="78" y="20" width="5" height="2.500" fill="#4a9b52" />
          <rect x="4" y="60" width="12" height="3" rx="1.500" fill="#cfe0fb" />
        </>
      )}
    </svg>
  );
};

const Trash = () => (
  <svg width="68" height="86" viewBox="0 0 68 86">
    <Grad id="tr" a="#cfcfce" b="#f2f2f3" />
    <path d="M6 18 10 5 22 10 27 1 34 8 42 1 48 10 60 8 64 19 50 24H20Z" fill="#e9e9e8" stroke="#9b9b99" />
    <path d="M14 8 22 17M30 9 27 18M44 8 52 18M38 13 34 20" stroke="#55524e" strokeWidth="2.400" />
    <path d="M26 10 32 13" stroke="#3ab0dc" strokeWidth="3" />
    <path d="M46 13 50 16" stroke="#a64b31" strokeWidth="3" />
    <path d="M2 18Q34 27 66 18L58 78Q56 84 48 84H20Q12 84 10 78Z" fill="url(#tr)" opacity=".93" />
    <path d="M2 18Q34 27 66 18" fill="none" stroke="#f7f7f7" strokeWidth="1.600" />
    <path d="M14 30 18 76M26 32 28 80M42 32 40 80M54 30 50 76" stroke="#dededd" strokeWidth="2" />
  </svg>
);

const ReactLogo = () => (
  <Svg s={32} box={32}>
    <rect width="32" height="32" rx="3" fill="#222325" />
    <g fill="none" stroke="#6fd3f2" strokeWidth="1.300">
      {[30, 90, 150].map((a) => (
        <ellipse key={a} cx="16" cy="16" rx="12.500" ry="4.800" transform={`rotate(${a - 30} 16 16)`} />
      ))}
    </g>
    <circle cx="16" cy="16" r="2.400" fill="#6fd3f2" />
  </Svg>
);

const EjsTile = styled.div`
  width: 32px;
  height: 32px;
  background: #f7d84d;
  color: #222;
  font: 700 22px/33px "Liberation Sans Narrow", "Liberation Sans", sans-serif;
  letter-spacing: -3.6px;
  text-indent: -4px;
  text-align: center;
  white-space: nowrap;
`;

const W3 = () => (
  <Svg s={32} box={32}>
    <path d="M2 9 9 22 14 11 19 22 25 9" fill="none" stroke="#3f9a6e" strokeWidth="5.500" />
    <path d="M27 5H31L29 8Q32 9 30 12H27" fill="none" stroke="#6bb38d" strokeWidth="1.600" />
  </Svg>
);

const Fcc = () => (
  <Svg s={32} box={32}>
    <rect width="32" height="32" fill="#0a0a23" />
    <path d="M6 7Q1 16 6 25M26 7Q31 16 26 25" fill="none" stroke="#d9d9e4" strokeWidth="1.800" />
    <path d="M17 7Q17 12 20 15 24 20 19 25 20 21 16 19 16 23 13 25 8 20 12 15 16 12 17 7Z" fill="#fff" />
  </Svg>
);

const Vite = () => (
  <Svg s={32} box={32}>
    <linearGradient id="vt" x1="0" y1="0" x2="1" y2="1">
      <stop offset="0" stopColor="#4fc5fb" />
      <stop offset="1" stopColor="#b13df2" />
    </linearGradient>
    <path d="M0 5 15 7 32 4 17 32Z" fill="url(#vt)" />
    <path d="M12 2 23 0 20 10 25 9 16 26 17 15 11 16Z" fill="#f9c940" />
  </Svg>
);

const Replit = () => (
  <Svg s={32} box={32}>
    <g fill="#e66d32">
      <rect x="6" y="4" width="10" height="8" rx="1.500" />
      <rect x="16" y="12" width="10" height="8" rx="1.500" />
      <rect x="6" y="20" width="10" height="8" rx="1.500" />
    </g>
  </Svg>
);

const AirTalk = () => (
  <Svg s={32} box={32}>
    <path d="M2 18 6 4 9 18M12 8V18M16 18V8Q18 6 20 8" fill="none" stroke="#5b8fd8" strokeWidth="2.200" />
    <path d="M17 3H27M23.500 2V18M28 1V18M32 7 28 12 32 18" fill="none" stroke="#7fb2ea" strokeWidth="2.400" />
    <path d="M9 10V17" stroke="#e58963" strokeWidth="1.800" />
    <path d="M2 23H31" stroke="#b3c2d8" strokeWidth="7" strokeDasharray="2.500 1.200" />
    <path d="M5 29.500H31" stroke="#eeb8a4" strokeWidth="2.400" />
  </Svg>
);

const Hashnode = () => (
  <Svg s={32} box={32}>
    <path d="M11 3.500Q16-3 21 3.500L29 11.500Q35 16 29 20.500L21 28.500Q16 35 11 28.500L3 20.500Q-3 16 3 11.500Z" fill="#3366ff" />
    <circle cx="16" cy="16" r="5.500" fill="#fff" />
  </Svg>
);

const Globe = () => (
  <Svg s={32} box={32}>
    <circle cx="16" cy="16" r="14" fill="#222326" />
    <path d="M4 16Q6 12 12 13 13 9 18 9V4Q10 3 5 10ZM12 15Q20 15 20 20 15 21 16 29L13 28Q13 22 8 19L4 17Z" fill="#fff" />
  </Svg>
);

/* ---------- data ---------- */

const MENUS: [string, number, number, boolean?][] = [
  ["Chrome", 38, 100, true],
  ["File", 42, 40],
  ["Edit", 44, 46],
  ["View", 42, 58],
  ["History", 41, 87],
  ["Bookmarks", 42, 134],
  ["Profiles", 42, 91],
  ["Tab", 42, 42],
  ["Window", 42, 96],
  ["Help", 42, 56],
];

const BOOKMARKS: [React.ReactNode, string, number, number][] = [
  [<FaGithub size={32} />, "Pursuit 10.2 · GitH...", 223, 302],
  [<EjsTile>EJS</EjsTile>, "Eloquent JavaScript", 225, 302],
  [<W3 />, "JavaScript Tutorial", 208, 286],
  [<Fcc />, "Learn to Code — F...", 226, 304],
  [<Vite />, "Spotify Web Playb...", 226, 304],
  [<Replit />, "10-2-pursuit - Replit", 232, 308],
  [<Fcc />, "JavaScript For Loo...", 229, 308],
  [<Globe />, "Login", 62, 140],
  [<AirTalk />, "program-icons", 166, 244],
  [<Hashnode />, "Higher-order Func...", 228, 306],
  [<Globe />, "Your referral gets...", 213, 260],
];

const EXPENSES: [string, string][] = [
  ["Shirt", "20.5"],
  ["Sweater", "35"],
  ["Jeans", "45"],
  ["T-shirt", "15"],
  ["Socks", "8"],
  ["Dress", "60"],
];

const DOCK: { art: React.ReactNode; dot?: boolean; ml: number }[] = [
  { art: <Finder />, dot: true, ml: 0 },
  { art: <Launchpad />, ml: 26 },
  { art: <Safari />, dot: true, ml: 26 },
  { art: <Messages />, dot: true, ml: 26 },
  { art: <Maps />, ml: 24 },
  {
    art: (
      <>
        <MailArt />
        <MailBadge>
          <Fit w={64}>170,829</Fit>
        </MailBadge>
      </>
    ),
    dot: true,
    ml: 26,
  },
  { art: <Photos />, ml: 26 },
  { art: <FaceTime />, ml: 26 },
  { art: <Contacts />, ml: 26 },
  { art: <Reminders />, ml: 26 },
  { art: <Notes />, dot: true, ml: 26 },
  { art: <Freeform />, ml: 26 },
  {
    art: (
      <TvTile>
        <FaApple size={25} />
        <TvText>tv</TvText>
      </TvTile>
    ),
    ml: 26,
  },
  { art: <Music />, dot: true, ml: 24 },
  { art: <AppStore />, ml: 26 },
  { art: <Settings />, dot: true, ml: 26 },
  { art: <GitHubTile><FaGithub size={61} /></GitHubTile>, dot: true, ml: 26 },
  { art: <VSCode />, dot: true, ml: 26 },
  { art: <Postgres />, dot: true, ml: 26 },
  {
    art: (
      <CalTile>
        <CalMonth>APR</CalMonth>
        <CalDay>3</CalDay>
      </CalTile>
    ),
    dot: true,
    ml: 26,
  },
  { art: <Firefox />, dot: true, ml: 26 },
  { art: <TermTile>&gt;_</TermTile>, dot: true, ml: 26 },
  { art: <News />, dot: true, ml: 24 },
  { art: <Postman />, dot: true, ml: 26 },
  { art: <Slack />, dot: true, ml: 26 },
];

export default function App() {
  return (
    <>
      <Global />
      <Desktop>
        <Backdrop $x={0} $y={44} $w={3584} $h={100} $bg="#1d1c19" />
        <Backdrop $x={0} $y={44} $w={40} $h={60} $bg="#c9c7c1" />
        <Backdrop $x={206} $y={2100} $w={3378} $h={140} $bg="linear-gradient(180deg, #2b2b2b, #44443f 14px, #dadada 60px, #dcdcdc)" />
        <Backdrop $x={3504} $y={2108} $w={80} $h={132} $bg="linear-gradient(180deg, #222 0, #777 20px, #c3c5c5 52px, #d6dada 98px, #e9e9e9 100px)" />
        <Backdrop $x={1281} $y={2230} $w={282} $h={10} $bg="#c9cbce" />
        <Backdrop $x={1563} $y={2230} $w={466} $h={10} $bg="#c4c4c4" />
        <Backdrop $x={2029} $y={2230} $w={1093} $h={10} $bg="#e4e4e4" />
        <Backdrop $x={3122} $y={2106} $w={72} $h={134} $bg="#20170c" />
        <Backdrop $x={0} $y={2060} $w={3584} $h={48} $bg="linear-gradient(90deg, #d4d4d4, #8f8f8f 191px, #0f0f0f 192px)" $r="0 0 20px 26px" />
        <Backdrop $x={191} $y={2090} $w={65} $h={18} $bg="#1f4f8a" $r="0 0 0 18px" />
        <PeekIcon $x={1319} $y={2224}>
          <svg width="30" height="30" viewBox="0 0 30 30">
            <circle cx="15" cy="15" r="13" fill="none" stroke="#8fa9ce" strokeWidth="2" />
            <circle cx="15" cy="15" r="8" fill="none" stroke="#8fa9ce" strokeWidth="2" />
            <circle cx="15" cy="15" r="3" fill="#8fa9ce" />
          </svg>
        </PeekIcon>
        <PeekText $x={1363} $y={2221} $c="#85878a">AirDrop</PeekText>
        <Backdrop $x={1597} $y={2234} $w={28} $h={8} $bg="#2f7fb8" $r="3px" />
        <PeekText $x={1638} $y={2232} $c="#222" $size={24}>Budget</PeekText>
        <Backdrop $x={2087} $y={2234} $w={28} $h={8} $bg="#2f7fb8" $r="3px" />
        <PeekText $x={2130} $y={2231} $c="#222" $size={24}>frontend</PeekText>
        <PeekText $x={3302} $y={2217} $c="#2a2a2a" $size={25}>
          <Fit w={266}>FirefoxCP WebExtensions</Fit>
        </PeekText>

        <MenuBar>
          <FaApple size={31} />
          {MENUS.map(([name, ml, w, bold]) => (
            <MenuItem key={name} $ml={ml} $bold={bold}>
              <Fit w={w}>{name}</Fit>
            </MenuItem>
          ))}
          <StatusArea>
            <StatusIcon $mr={36}>
              <svg width="40" height="32" viewBox="0 0 40 32">
                <path d="M0 9Q6 15 11 12 11 0 22 0 39 3 39 15V31H32V24H24V31H16V23Q8 22 6 17 1 14 0 9Z" fill="#222420" />
              </svg>
            </StatusIcon>
            <StatusIcon $mr={34}>
              <svg width="29" height="29" viewBox="0 0 29 29">
                <circle cx="14.500" cy="14.500" r="13" fill="none" stroke="#222420" strokeWidth="2.600" />
                <ellipse cx="14.500" cy="12" rx="5" ry="6" fill="#222420" />
                <path d="M5 23Q14 16 24 23 14.500 31 5 23Z" fill="#222420" />
              </svg>
            </StatusIcon>
            <StatusIcon $mr={37}>
              <svg width="53" height="26" viewBox="0 0 53 26">
                <rect x="1" y="1" width="46" height="24" rx="7" fill="none" stroke="#8d8b85" strokeWidth="2" />
                <path d="M49.500 9Q53 13 49.500 17Z" fill="#8d8b85" />
                <rect x="4" y="4" width="40" height="18" rx="4" fill="#222420" />
                <path d="M28 1 14 15H22L19 25 34 11H26Z" fill="#222420" stroke="#e5e2da" strokeWidth="2.200" />
              </svg>
            </StatusIcon>
            <StatusIcon $mr={39}>
              <svg width="34" height="25" viewBox="0 0 34 25">
                <path d="M2 9Q17-4 32 9M7.500 15Q17 6.500 26.500 15" fill="none" stroke="#222420" strokeWidth="3.800" />
                <path d="M12 18.500Q17 14.500 22 18.500L17 24.500Z" fill="#222420" />
              </svg>
            </StatusIcon>
            <StatusIcon $mr={40}>
              <svg width="26" height="26" viewBox="0 0 26 26">
                <circle cx="10.500" cy="10.500" r="9" fill="none" stroke="#222420" strokeWidth="2.600" />
                <path d="M17 17 24.500 24.500" stroke="#222420" strokeWidth="3" strokeLinecap="round" />
              </svg>
            </StatusIcon>
            <StatusIcon $mr={36}>
              <svg width="27" height="27" viewBox="0 0 27 27">
                <rect x="1.300" y="1.300" width="24.400" height="10.400" rx="5.200" fill="none" stroke="#222420" strokeWidth="2.400" />
                <circle cx="7" cy="6.500" r="3.600" fill="#222420" />
                <rect y="14.500" width="27" height="12.500" rx="6.200" fill="#222420" />
                <circle cx="20" cy="20.700" r="3.800" fill="#e5e2da" />
              </svg>
            </StatusIcon>
            <StatusIcon $mr={33}>
              <svg width="28" height="28" viewBox="0 0 28 28">
                <radialGradient id="siri">
                  <stop offset="0" stopColor="#f4f7ff" />
                  <stop offset=".5" stopColor="#8f9be8" />
                  <stop offset="1" stopColor="#55577c" />
                </radialGradient>
                <circle cx="14" cy="14" r="14" fill="url(#siri)" />
                <path d="M2 12Q5 0 18 2 10 8 13 14 6 20 2 12Z" fill="#e0568c" opacity=".85" />
                <path d="M16 2Q26 6 25 16L16 13Z" fill="#52b9a8" opacity=".85" />
                <path d="M6 21Q14 28 22 23L14 15Z" fill="#58a7f0" opacity=".8" />
                <circle cx="14.500" cy="13.500" r="3" fill="#fff" opacity=".8" />
              </svg>
            </StatusIcon>
            <Clock>
              <Fit w={125}>Wed Apr 3</Fit>
              <Fit w={112}>12:58 AM</Fit>
            </Clock>
          </StatusArea>
        </MenuBar>

        <Browser>
          <TabStrip>
            <Lights>
              <Light $c="#ed6a5f" $b="#dd5a4f" />
              <Light $c="#f5bf4f" $b="#e2a93b" />
              <Light $c="#62c655" $b="#51b244" />
            </Lights>
            <Tab>
              <ReactLogo />
              <Fit w={116}>React App</Fit>
              <TabClose>
                <MdClose size={25} color="#1f2023" />
              </TabClose>
            </Tab>
            <NewTab>
              <MdAdd size={32} color="#1f2023" />
            </NewTab>
            <TabSearch>
              <svg width="18" height="12" viewBox="0 0 18 12">
                <path d="M2 2 9 9 16 2" fill="none" stroke="#1f2023" strokeWidth="3.200" />
              </svg>
            </TabSearch>
          </TabStrip>

          <Toolbar>
            <NavButton $ml={0}><MdArrowBack size={37} /></NavButton>
            <NavButton $ml={35} $dim><MdArrowForward size={37} /></NavButton>
            <NavButton $ml={34}><MdRefresh size={38} /></NavButton>
            <NavButton $ml={34}><MdOutlineHome size={38} /></NavButton>
            <Address>
              <InfoChip><MdOutlineInfo size={32} /></InfoChip>
              <Fit w={957}>
                <Host>localhost</Host>:3001/budgets/3ad49602-af55-4518-9c35-f24962a7d941/edit
              </Fit>
              <AddressTools>
                <MdInstallDesktop size={38} />
                <MdStarBorder size={38} />
              </AddressTools>
            </Address>
            <Extensions>
              <ExtTile $bg="#a35f50">
                <svg width="12" height="20" viewBox="0 0 12 20"><path d="M1 1 11 10 1 19Z" fill="#fff" /></svg>
              </ExtTile>
              <ExtTile $bg="#84aea0"><SiOpenai size={25} /></ExtTile>
              <MdOutlineExtension size={39} />
              <Divider $ml={29} $mr={37} />
              <svg width="30" height="30" viewBox="0 0 30 30">
                <rect x="2" y="2" width="26" height="26" rx="2" fill="none" stroke="#1f2023" strokeWidth="4" />
                <path d="M18 2H28V28H18Z" fill="#1f2023" />
              </svg>
              <Avatar>A</Avatar>
              <MdMoreVert size={40} />
            </Extensions>
          </Toolbar>

          <Bookmarks>
            {BOOKMARKS.map(([icon, name, w, full], i) => (
              <Bookmark key={i} $w={full}>
                <BookmarkIcon>{icon}</BookmarkIcon>
                <Fit w={w}>{name}</Fit>
              </Bookmark>
            ))}
            <BookmarksEnd>
              <svg width="22" height="18" viewBox="0 0 22 18">
                <path d="M2 2 9 9 2 16M12 2 19 9 12 16" fill="none" stroke="#1f2023" strokeWidth="3" />
              </svg>
              <EndGap />
              <Divider $mr={27} />
              <MdOutlineFolder size={40} color="#5f6063" />
              <LabelGap />
              <Fit w={159}>All Bookmarks</Fit>
            </BookmarksEnd>
          </Bookmarks>

          <Page>
            <Title><Fit w={657}>My Expense Tracker App</Fit></Title>
            <Links>
              <ScriptLink><Fit w={181}>Show Budgets</Fit></ScriptLink>
              <ScriptLink><Fit w={193}>Show Expenses</Fit></ScriptLink>
              <ScriptLink><Fit w={171}>Add Expense</Fit></ScriptLink>
            </Links>
            <Heading>Edit Budget</Heading>
            <Form>
              <Label $w={125}>Category:</Label>
              <Select>
                Apparel
                <svg width="20" height="14" viewBox="0 0 20 14">
                  <path d="M2 3 10 11 18 3" fill="none" stroke="#222" strokeWidth="2.400" />
                </svg>
              </Select>
              <Label $w={128} $ml={33}>Max Spending:</Label>
              <Input $ml={34}>2000</Input>
              <Label $w={150} $ml={22}>Amount Remaining:</Label>
              <Input $ml={23} $focus>
                <Caret />
                1816.5
                <Spinner>
                  <svg width="14" height="24" viewBox="0 0 14 24">
                    <path d="M0 8 7 0 14 8ZM0 15H14L7 23Z" fill="#4d4d4d" />
                  </svg>
                </Spinner>
              </Input>
            </Form>
            <SubHeading>Expenses</SubHeading>
            <Table>
              <HeadRow $bg="#efefef">
                <span>Delete</span>
                <span>Description</span>
                <span>Amount</span>
                <span>Edit</span>
              </HeadRow>
              {EXPENSES.map(([name, amount], i) => (
                <Row key={name} $bg={i % 2 ? "#e861e5" : "#f09a63"}>
                  <RowIcon $c="#ea3323" $shift={2}><BinIcon /></RowIcon>
                  <ItemLink>{name}</ItemLink>
                  <span>{amount}</span>
                  <RowIcon $c="#0a1ef5" $shift={16}><RiPencilLine size={32} /></RowIcon>
                </Row>
              ))}
            </Table>
            <Buttons>
              <Button $w={141}>Save</Button>
              <Button $w={163}>Cancel</Button>
            </Buttons>
            <GreenTag>
              <svg width="36" height="40" viewBox="0 0 36 40" fill="none" stroke="#fff" strokeWidth="2.800">
                <path d="M18 2 34 11V29L18 38 2 29V11Z" />
                <path d="M18 12 26 16V24L18 28 10 24V16Z" />
              </svg>
            </GreenTag>
            <BotTag>
              <svg width="48" height="48" viewBox="0 0 48 48">
                <linearGradient id="bot" x1="0" y1="1" x2="1" y2="0">
                  <stop offset="0" stopColor="#c04fd0" />
                  <stop offset=".45" stopColor="#4a50ee" />
                  <stop offset="1" stopColor="#3d2fe8" />
                </linearGradient>
                <circle cx="24" cy="24" r="21.500" fill="#fff" stroke="url(#bot)" strokeWidth="5" />
                <path d="M45.500 26A21.500 21.500 0 0 1 28 45" fill="none" stroke="#56b9dd" strokeWidth="5" />
                <rect x="12" y="19.500" width="6.500" height="11" rx="3" fill="#1c1c1c" />
                <path d="M35 21.500 29.500 25.500 35.500 29" fill="none" stroke="#1c1c1c" strokeWidth="3.400" strokeLinecap="round" />
              </svg>
            </BotTag>
          </Page>
        </Browser>

        <Dock>
          {DOCK.map((d, i) => (
            <DockItem key={i} $ml={d.ml} $w={72}>
              {d.art}
              {d.dot && <Dot $dark={i === 0} />}
            </DockItem>
          ))}
          <DockDivider $ml={35} />
          <DockItem $ml={33} $w={72}><ChromeArt /><Dot /></DockItem>
          <DockItem $ml={26} $w={72}><Activity /><Dot /></DockItem>
          <DockItem $ml={30} $w={64}><Lift><Installer /></Lift><Dot /></DockItem>
          <DockDivider $ml={39} />
          <DockItem $ml={40} $w={56}><Lift><Zip /></Lift></DockItem>
          <DockItem $ml={28} $w={85}><Thumb kind="mail" /><MiniBadge><MailArt s={28} /></MiniBadge></DockItem>
          <DockItem $ml={13} $w={85}><Thumb kind="apps" /><MiniBadge><Finder s={28} /></MiniBadge></DockItem>
          <DockItem $ml={11} $w={85}><Thumb kind="empty" /><MiniBadge><Finder s={28} /></MiniBadge></DockItem>
          <DockItem $ml={13} $w={85}><Thumb kind="chrome" /><MiniBadge><ChromeArt s={28} /></MiniBadge></DockItem>
          <DockItem $ml={22} $w={68}><Lift><Trash /></Lift></DockItem>
        </Dock>
      </Desktop>
    </>
  );
}
